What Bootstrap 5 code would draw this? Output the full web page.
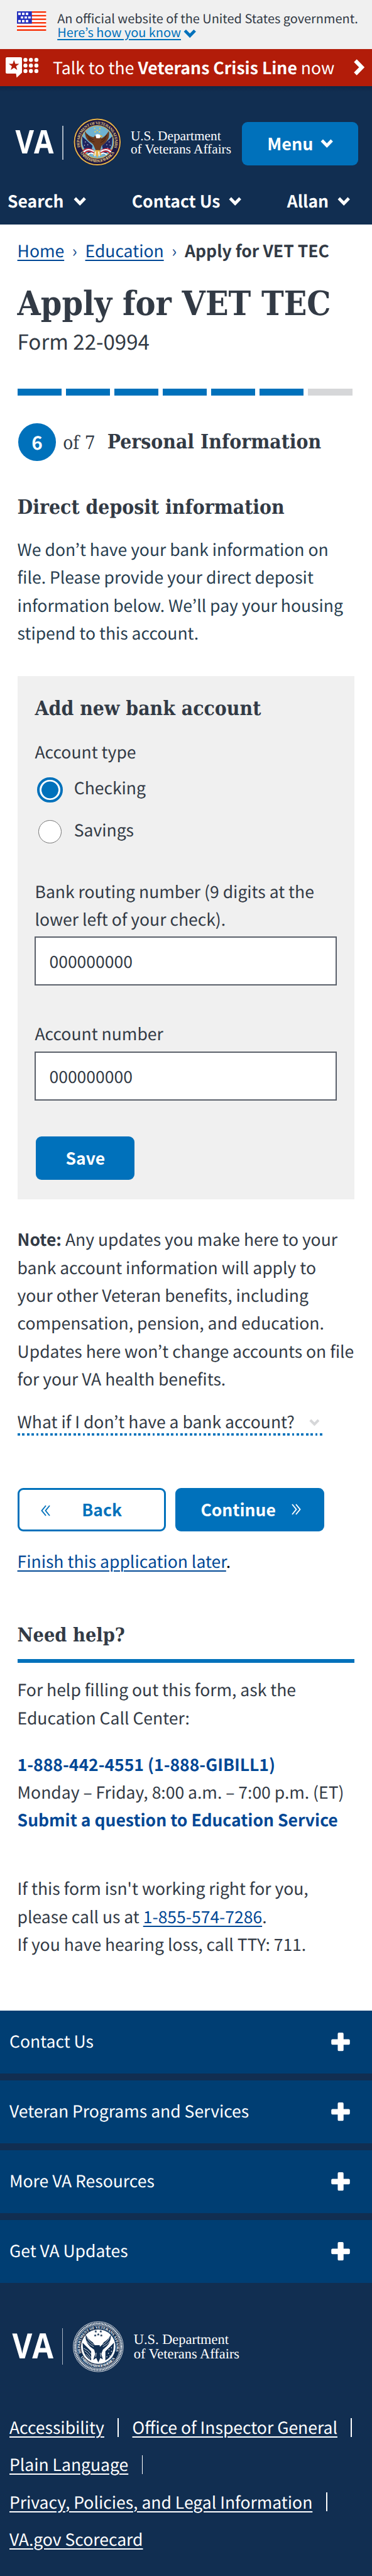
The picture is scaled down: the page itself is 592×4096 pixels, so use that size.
<!DOCTYPE html>
<html lang="en">
<head>
<meta charset="utf-8">
<meta name="viewport" content="width=device-width, initial-scale=1">
<title>Apply for VET TEC | Veterans Affairs</title>
<link href="https://cdn.jsdelivr.net/npm/bootstrap@5.3.0/dist/css/bootstrap.min.css" rel="stylesheet">
<style>
  :root { --va-blue:#0071bb; --va-link:#004795; --va-ink:#323a45; --va-navy:#112e51; --va-panel:#f0f0f0; }
  body { font-family:"Noto Sans CJK JP","Source Sans Pro",sans-serif; font-size:26.5px; line-height:44.4px; color:var(--va-ink); background:#fff; overflow-x:hidden; text-rendering:geometricPrecision; }
  svg { display:block; flex:none; overflow:visible; }
  p, h1, h2, h3 { margin:0; white-space:nowrap; }
  a { color:var(--va-link); text-decoration-thickness:2px; text-underline-offset:4px; }
  .slab { font-family:"DejaVu Serif Condensed","DejaVu Serif",serif; font-stretch:condensed; font-weight:700; color:var(--va-ink); font-size:31.6px; line-height:44.4px; }

  .gov { height:77.7px; background:var(--va-panel); padding:17.8px 0 0 26.8px; font-size:19.95px; line-height:22.2px; }
  .gov .flag { margin-top:.7px; margin-right:18px; }
  .gov a { color:var(--va-blue); text-underline-offset:3px; }
  .crisis { height:59.2px; background:#b21c09; color:#fff; line-height:58.6px; padding:0 11.5px 0 9px; }
  .crisis .msg { margin-left:22.5px; font-size:26.6px; }
  .masthead { height:220.1px; background:linear-gradient(#0f2847,var(--va-navy) 9px); color:#fff; padding-top:51.5px; }
  .brandrow { height:76px; padding-left:24.5px; }
  .brandtext { font-family:"Liberation Serif",serif; font-size:21.3px; line-height:21.9px; color:#fff; white-space:nowrap; width:159.600px; }
  .rule-v { width:1.6px; background:#a9b5c3; }
  .va-btn { height:68.4px; border-radius:9px; background:var(--va-blue); color:#fff; font-weight:700; font-size:26.5px; line-height:1; border:0; padding:0; }
  .menu-btn { width:185px; font-size:27px; margin-top:5.8px; margin-left:17.8px; padding:0 39.5px 1px 40px; }
  .topnav { font-weight:700; margin-top:33.1px; padding:0 35px 0 12px; }

  main { padding:18.75px 27.6px 0; }
  .crumbs { height:44.4px; }
  .crumbs .sep { width:33.4px; text-align:center; color:#1a4f8f; }
  h1.slab { font-size:53.4px; line-height:60px; margin-top:33.1px; }
  .formno { font-size:33.1px; margin-top:7.25px; }
  .steps { display:flex; gap:6.5px; margin-top:53px; width:532.9px; }
  .steps i { flex:1; height:11.1px; background:var(--va-blue); }
  .steps i.todo { background:#d6d7d9; }
  .stepline { height:59.3px; margin-top:44.4px; padding-left:1.8px; }
  .stepnum { width:59.3px; height:59.3px; background:var(--va-blue); color:#fff; font-weight:700; font-size:29.6px; line-height:59.3px; }
  .stepof { font-family:"DejaVu Serif Condensed","DejaVu Serif",serif; font-stretch:condensed; font-size:29.6px; letter-spacing:.1px; margin-left:11.5px; width:70.5px; padding-top:3px; white-space:nowrap; }
  .intro { margin-top:21.75px; color:#283e50; }
  .panel { background:var(--va-panel); margin-top:46.1px; margin-right:.4px; height:832.5px; padding:30.35px 27.6px 0 27.9px; }
  .radio-row { height:44.4px; }
  .dot { width:40.7px; height:40.7px; border:4px solid var(--va-blue); background:radial-gradient(circle,var(--va-blue) 13px,#fff 13.8px); border-radius:50%; margin:5.4px 17.8px 0 3.8px; flex:none; }
  .dot.off { width:37px; height:37px; border:1.8px solid #757575; background:#fff; margin:7px 19.6px 0 5.6px; }
  .va-input { height:77.7px; border:2px solid #5b616b; border-radius:0; background:#fff; color:var(--va-ink); font-size:26.5px; line-height:73.700px; padding:0 21px; }
  .expander { display:inline-flex; height:44.85px; margin-top:23.45px; width:485.4px;
    background:repeating-linear-gradient(90deg,var(--va-blue) 0 3.7px,transparent 3.7px 7.4px) bottom/100% 3.7px no-repeat; }
  .pager { gap:14.9px; margin-top:83.3px; }
  .pager .va-btn { width:236.9px; }
  .pager .back { background:#fff; color:var(--va-blue); border:3.7px solid var(--va-blue); }
  .helprule { height:5.55px; background:var(--va-blue); margin-top:16.05px; }
  .strong-link { color:var(--va-link); font-weight:700; text-decoration:none; }

  footer { margin-top:83.45px; background:var(--va-navy); color:#fff; height:899.2px; overflow:hidden; }
  .foot-item { height:99.9px; background:#003e73; margin-bottom:11.1px; padding:0 35px 0 15px; }
  .foot-item span { padding-bottom:3.2px; }
  .foot-links { padding-left:15px; line-height:59.2px; margin-top:57px; }
  .foot-links a { color:#fff; }
  .foot-links .bar { width:1.8px; height:29.6px; background:#fff; margin:2px 21.4px 0; }
  .footbrand { height:81px; padding-left:19.6px; margin-top:61.5px; }
  .footbrand .brandtext { font-size:22.4px; line-height:22.6px; }
</style>
</head>
<body>
<svg width="0" height="0" class="position-absolute" aria-hidden="true">
  <symbol id="chev" viewBox="0 0 20 14"><path d="M2.200 2.200 10 10.200 17.800 2.200" fill="none" stroke="currentColor" stroke-width="4.800"/></symbol>
  <symbol id="plus" viewBox="0 0 30 30"><path d="M12.400 0h5.400a2 2 0 0 1 2 2v8.600H28a2 2 0 0 1 2 2v4.800a2 2 0 0 1-2 2h-8.200V28a2 2 0 0 1-2 2h-5.400a2 2 0 0 1-2-2v-8.600H2a2 2 0 0 1-2-2v-4.800a2 2 0 0 1 2-2h8.400V2a2 2 0 0 1 2-2z" fill="currentColor"/></symbol>
  <symbol id="star" viewBox="-10 -10 20 20"><path d="M0-10 2.400-3.200 9.500-3.100 3.800 1.200 5.900 8.100 0 4-5.900 8.100-3.800 1.200-9.500-3.100-2.400-3.200z" fill="currentColor"/></symbol>
</svg>

<div class="gov d-flex align-items-start">
  <svg class="flag" width="46.4" height="31" viewBox="0 0 46.4 31">
    <rect width="46.4" height="31" fill="#fff"/>
    <g fill="#f8320a"><rect width="46.4" height="2.4"/><rect y="5.7" width="46.4" height="2.4"/><rect y="11.4" width="46.4" height="2.4"/><rect y="17.1" width="46.4" height="2.4"/><rect y="22.8" width="46.4" height="2.4"/><rect y="28.5" width="46.4" height="2.5"/></g>
    <rect width="23.7" height="19.6" fill="#2431bd"/>
    <g fill="#fff"><rect x="2" y="2.2" width="4" height="3.6"/><rect x="8" y="2.2" width="4" height="3.6"/><rect x="14" y="2.2" width="4" height="3.6"/><rect x="6" y="8.2" width="4" height="3.2"/><rect x="12" y="8.2" width="4" height="3.2"/><rect x="17.8" y="8.2" width="4" height="3.2"/><rect x="2" y="13.8" width="4" height="3.6"/><rect x="8" y="13.8" width="4" height="3.6"/><rect x="14" y="13.8" width="4" height="3.6"/></g>
  </svg>
  <p>An official website of the United States government.<br>
    <span class="d-inline-flex align-items-center"><a href="#">Here’s how you know</a><svg class="ms-1 mt-1" width="20.4" height="15" viewBox="0 0 20 14" style="color:#0071bb"><use href="#chev"/></svg></span></p>
</div>

<div class="crisis d-flex align-items-center">
  <svg width="52.4" height="33" viewBox="0 0 52.4 33">
    <path d="M2 0h22a2 2 0 0 1 2 2v22.500L17.500 32.500 16.500 26H2a2 2 0 0 1-2-2V2a2 2 0 0 1 2-2z" fill="#fff"/>
    <use href="#star" x="4.500" y="4.500" width="17.500" height="17.500" color="#b21c09"/>
    <g fill="#fff"><circle cx="31.500" cy="4.300" r="3.200"/><circle cx="40.200" cy="4.300" r="3.200"/><circle cx="48.900" cy="4.300" r="3.200"/><circle cx="31.500" cy="13.200" r="3.200"/><circle cx="40.200" cy="13.200" r="3.200"/><circle cx="48.900" cy="13.200" r="3.200"/><circle cx="31.500" cy="22" r="3.200"/><circle cx="40.200" cy="22" r="3.200"/><circle cx="48.900" cy="22" r="3.200"/></g>
  </svg>
  <p class="msg">Talk to the <strong>Veterans Crisis Line</strong> now</p>
  <svg class="ms-auto" width="17.500" height="26" viewBox="0 0 17.500 26"><path d="M2.500 2.500 12.800 13 2.500 23.500" fill="none" stroke="#fff" stroke-width="6.200"/></svg>
</div>

<header class="masthead">
  <div class="brandrow d-flex align-items-start">
    <svg width="61" height="76" viewBox="0 0 61 76"><text x="-.5" y="55.800" textLength="61" lengthAdjust="spacingAndGlyphs" font-family="Open Sans" font-weight="700" font-size="51.800" fill="#fff">VA</text></svg>
    <div class="rule-v" style="height:54px;margin:11.500px 16px 0 13.700px"></div>
    <svg width="75.600" height="75.600" viewBox="-50 -50 100 100">
      <circle r="50" fill="#15103f"/><circle r="48" fill="none" stroke="#e3b548" stroke-width="2.600"/><circle r="45.500" fill="#1d1846"/>
      <circle r="34.500" fill="#6fb3d2" stroke="#d9ae4c" stroke-width="1.600"/>
      <path id="arcT" d="M-33.500 16.500A37.300 37.300 0 1 1 33.500 16.500" fill="none"/><path id="arcB" d="M-38 19A42.500 42.500 0 0 0 38 19" fill="none"/>
      <g font-family="Liberation Serif" font-weight="700" font-size="8.500" fill="#e2c67c"><text><textPath href="#arcT" startOffset="6" textLength="140">DEPARTMENT OF VETERANS AFFAIRS</textPath></text><text><textPath href="#arcB" startOffset="4" textLength="86">UNITED STATES OF AMERICA</textPath></text></g>
      <g color="#f2d24e"><use href="#star" x="-2.500" y="-27" width="5" height="5"/><use href="#star" x="-8" y="-31" width="5" height="5"/><use href="#star" x="3" y="-31" width="5" height="5"/><use href="#star" x="-7" y="-24" width="5" height="5"/><use href="#star" x="2" y="-24" width="5" height="5"/></g>
      <path d="M-32-12Q-24-5-10 8L-14 26Q-27 20-31 6zM32-12Q24-5 10 8L14 26Q27 20 31 6z" fill="#20245e"/>
      <g fill="#e8ecf4"><circle cx="-25" cy="0" r="1"/><circle cx="-20" cy="6" r="1"/><circle cx="-27" cy="7" r="1"/><circle cx="25" cy="0" r="1"/><circle cx="20" cy="6" r="1"/><circle cx="27" cy="7" r="1"/><circle cx="22" cy="13" r="1"/></g>
      <g fill="none" stroke-width="2.600"><path d="M-30 18Q-20 10-8 18M-28 24Q-18 15-6 23M30 18Q20 10 8 18M28 24Q18 15 6 23" stroke="#c8283a"/><path d="M-29 21Q-19 12-7 20M29 21Q19 12 7 20M-20 27Q-14 20-5 27M20 27Q14 20 5 27" stroke="#fff"/></g>
      <path d="M-26-23Q-27-10-17-1-8 4-7 9L-3 18 6 18 9 8Q19 2 24-9 26-18 24-23 18-13 11-9 6-7 6-11 4-17-3-15L-8-10Q-19-12-26-23z" fill="#6b3b1f"/>
      <path d="M-22-16Q-16-7-8-5M-19-9Q-14-2-6 0M20-15Q15-6 8-4M18-8Q13-1 7 1" stroke="#3c1f12" stroke-width="1.500" fill="none"/>
      <path d="M-4-15Q3-19 8-13L5-8-2-8z" fill="#fff"/><path d="M6-15l6 3-5 2z" fill="#eab02d"/>
      <path d="M-5 17-9 30-3 27 0 34 3 26 9 29 5 17z" fill="#e5b44b"/><path d="M-4 20-5 30M3 20 4 30" stroke="#fff" stroke-width="2"/>
    </svg>
    <div class="brandtext" style="margin:17.200px 0 0 15.500px">U.S. Department<br>of Veterans Affairs</div>
    <button class="va-btn menu-btn d-flex align-items-center justify-content-between" type="button">Menu <svg width="20.400" height="14.300"><use href="#chev"/></svg></button>
  </div>
  <nav class="topnav d-flex justify-content-between align-items-center">
    <span class="d-flex align-items-center">Search <svg style="margin:1.500px 0 0 15.500px" width="20.400" height="14.300"><use href="#chev"/></svg></span>
    <span class="d-flex align-items-center">Contact Us <svg style="margin:1.500px 0 0 13.500px" width="20.400" height="14.300"><use href="#chev"/></svg></span>
    <span class="d-flex align-items-center">Allan <svg style="margin:1.500px 0 0 13.500px" width="20.400" height="14.300"><use href="#chev"/></svg></span>
  </nav>
</header>

<main>
  <nav class="crumbs d-flex text-nowrap" aria-label="Breadcrumb">
    <a href="#">Home</a><span class="sep">›</span><a href="#">Education</a><span class="sep">›</span><strong>Apply for VET TEC</strong>
  </nav>
  <h1 class="slab">Apply for VET TEC</h1>
  <p class="formno">Form 22-0994</p>

  <div class="steps"><i></i><i></i><i></i><i></i><i></i><i></i><i class="todo"></i></div>
  <div class="stepline d-flex align-items-center">
    <span class="stepnum rounded-circle text-center">6</span>
    <span class="stepof">of 7</span>
    <h2 class="slab">Personal Information</h2>
  </div>

  <h3 class="slab" style="margin-top:52.200px">Direct deposit information</h3>
  <p class="intro">We don’t have your bank information on<br>file. Please provide your direct deposit<br>information below. We’ll pay your housing<br>stipend to this account.</p>

  <form class="panel">
    <h3 class="slab">Add new bank account</h3>
    <p style="margin-top:23.550px">Account type</p>
    <div class="radio-row d-flex align-items-start" style="margin-top:12.950px"><span class="dot"></span><span>Checking</span></div>
    <div class="radio-row d-flex align-items-start" style="margin-top:22.200px"><span class="dot off"></span><span>Savings</span></div>
    <p style="margin-top:53.650px">Bank routing number (9 digits at the<br>lower left of your check).</p>
    <div class="va-input form-control" style="margin-top:5.300px">000000000</div>
    <p style="margin-top:53.900px">Account number</p>
    <div class="va-input form-control" style="margin-top:7.150px">000000000</div>
    <button class="va-btn" type="button" style="width:157px;margin:57.400px 0 0 1.900px">Save</button>
  </form>

  <p style="margin-top:40.950px"><strong>Note:</strong> Any updates you make here to your<br>bank account information will apply to<br>your other Veteran benefits, including<br>compensation, pension, and education.<br>Updates here won’t change accounts on file<br>for your VA health benefits.</p>
  <div class="d-flex"><div class="expander text-nowrap">What if I don’t have a bank account?<svg class="ms-auto" style="color:#d6d7d9;margin:17.600px 4.400px 0 0" width="16.800" height="12"><use href="#chev"/></svg></div></div>

  <div class="pager d-flex">
    <button class="va-btn back d-flex align-items-center justify-content-between" type="button" style="padding-left:34px;padding-right:67.500px"><svg style="margin-top:4px" width="15" height="18" viewBox="0 0 15 18"><path d="M8 1 1.500 9 8 17M14 1 7.500 9 14 17" fill="none" stroke="currentColor" stroke-width="1.900"/></svg><span>Back</span></button>
    <button class="va-btn d-flex align-items-center justify-content-between" type="button" style="padding:0 37.500px 0 40px"><span>Continue</span><svg width="15" height="18" viewBox="0 0 15 18"><path d="M1 1 7.500 9 1 17M7 1 13.500 9 7 17" fill="none" stroke="currentColor" stroke-width="1.900"/></svg></button>
  </div>
  <p style="margin-top:25.750px"><a href="#">Finish this application later</a><span class="text-black">.</span></p>

  <h3 class="slab" style="font-size:30.400px;margin-top:72.900px">Need help?</h3>
  <div class="helprule"></div>
  <p style="margin-top:20.500px">For help filling out this form, ask the<br>Education Call Center:</p>
  <p style="margin-top:29.600px"><a class="strong-link" href="#">1-888-442-4551 (1-888-GIBILL1)</a><br>Monday – Friday, 8:00 a.m. – 7:00 p.m. (ET)<br><a class="strong-link" href="#">Submit a question to Education Service</a></p>
  <p style="margin-top:64.400px">If this form isn't working right for you,<br>please call us at <a href="#">1-855-574-7286</a>.<br>If you have hearing loss, call TTY: 711.</p>
</main>

<footer>
  <div class="foot-item d-flex align-items-center justify-content-between"><span>Contact Us</span><svg width="30" height="29.600"><use href="#plus"/></svg></div>
  <div class="foot-item d-flex align-items-center justify-content-between"><span>Veteran Programs and Services</span><svg width="30" height="29.600"><use href="#plus"/></svg></div>
  <div class="foot-item d-flex align-items-center justify-content-between"><span>More VA Resources</span><svg width="30" height="29.600"><use href="#plus"/></svg></div>
  <div class="foot-item d-flex align-items-center justify-content-between"><span>Get VA Updates</span><svg width="30" height="29.600"><use href="#plus"/></svg></div>

  <div class="footbrand d-flex align-items-start">
    <svg width="65" height="81" viewBox="0 0 65 81"><text x="-.5" y="58.800" textLength="65.500" lengthAdjust="spacingAndGlyphs" font-family="Open Sans" font-weight="700" font-size="55.400" fill="#fff">VA</text></svg>
    <div class="rule-v" style="height:58px;margin:11px 16px 0 14.300px"></div>
    <svg width="80.800" height="80.800" viewBox="-50 -50 100 100">
      <g fill="none" stroke="#fff"><circle r="49.300" stroke-width="1"/><circle r="45.600" stroke-width="4" stroke-dasharray="1.800 1.200"/><circle r="42.600" stroke-width=".8"/></g>
      <circle r="34" fill="#fff"/>
      <g font-family="Liberation Serif" font-weight="700" font-size="7.300" fill="#fff"><text><textPath href="#arcF" startOffset="4" textLength="134">DEPARTMENT OF VETERANS AFFAIRS</textPath></text><text><textPath href="#arcG" startOffset="4" textLength="80">UNITED STATES OF AMERICA</textPath></text></g>
      <path id="arcF" d="M-32 16A35.800 35.800 0 1 1 32 16" fill="none"/><path id="arcG" d="M-36.500 17A40.200 40.200 0 0 0 36.500 17" fill="none"/>
      <g color="#112e51"><use href="#star" x="-3" y="-27" width="6" height="6"/><use href="#star" x="-8" y="-33" width="6" height="6"/><use href="#star" x="2" y="-33" width="6" height="6"/><use href="#star" x="-9" y="-25" width="6" height="6"/><use href="#star" x="3" y="-25" width="6" height="6"/></g>
      <path d="M-25-24Q-26-9-16 0L-8 6-6 14-10 26-4 22 0 31 4 22 9 25 6 14 9 6 17-1Q25-9 25-24 20-14 11-9L7-3-7-3-11-9Q-20-14-25-24z" fill="#112e51"/>
      <path d="M-31-8-14 9-14 27Q-27 20-30 5zM31-8 14 9 14 27Q27 20 30 5z" fill="#112e51"/>
      <g fill="none" stroke="#fff" stroke-width="1"><path d="M-22-18Q-17-8-9-4M-24-12Q-18-4-9 0M-23-22Q-15-12-9-8M22-18Q17-8 9-4M24-12Q18-4 9 0M23-22Q15-12 9-8M-27 8Q-20 12-14 22M-29 3Q-20 6-13 16M-24 15-16 24M-4 12-5 20M4 12 5 20"/><path d="M-3-6Q2-9 6-4L3-1" stroke-width="2"/></g>
      <g fill="#fff"><circle cx="26" cy="2" r="1"/><circle cx="21" cy="6" r="1"/><circle cx="26" cy="9" r="1"/><circle cx="20" cy="13" r="1"/><circle cx="23" cy="18" r="1"/><circle cx="17" cy="20" r="1"/></g>
    </svg>
    <div class="brandtext" style="margin:18.200px 0 0 15.500px">U.S. Department<br>of Veterans Affairs</div>
  </div>

  <div class="foot-links text-nowrap">
    <div class="d-flex align-items-center"><a href="#">Accessibility</a><i class="bar"></i><a href="#">Office of Inspector General</a><i class="bar"></i></div>
    <div class="d-flex align-items-center"><a href="#">Plain Language</a><i class="bar"></i></div>
    <div class="d-flex align-items-center"><a href="#">Privacy, Policies, and Legal Information</a><i class="bar"></i></div>
    <div class="d-flex align-items-center"><a href="#">VA.gov Scorecard</a></div>
  </div>
</footer>
<script src="https://cdn.jsdelivr.net/npm/bootstrap@5.3.0/dist/js/bootstrap.bundle.min.js"></script>
</body>
</html>
